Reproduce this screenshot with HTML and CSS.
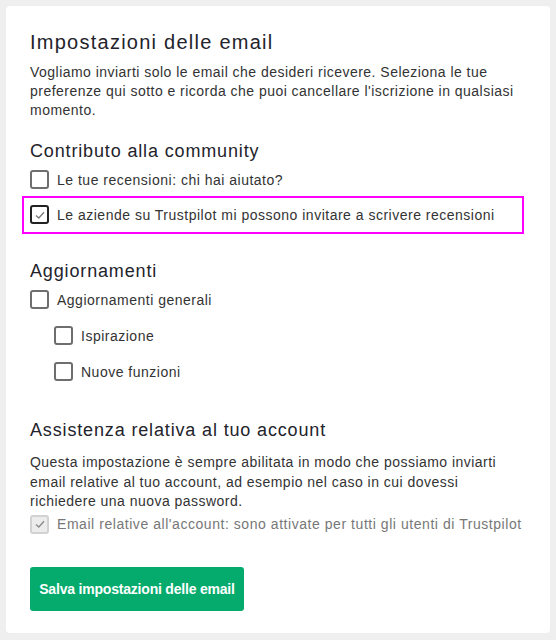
FILE: index.html
```html
<!DOCTYPE html>
<html lang="it">
<head>
  <meta charset="UTF-8">
  <meta name="viewport" content="width=device-width, initial-scale=1.0">
  <title>Impostazioni delle email</title>
  <link rel="stylesheet" href="styles.css">
</head>
<body>

  <div class="card">
    <h1 class="title">Impostazioni delle email</h1>
    <p class="intro">Vogliamo inviarti solo le email che desideri ricevere. Seleziona le tue preferenze qui sotto e ricorda che puoi cancellare l'iscrizione in qualsiasi momento.</p>

    <!-- Community -->
    <h2 class="section-title first">Contributo alla community</h2>
    <label class="option">
      <span class="box"></span>
      <span class="label-text">Le tue recensioni: chi hai aiutato?</span>
    </label>
    <label class="option highlighted">
      <span class="box checked">
        <svg viewBox="0 0 14 14" width="14" height="14"><path d="M3 7.4 L5.8 10 L11 4.2" fill="none" stroke="#7a7a7a" stroke-width="1.3"/></svg>
      </span>
      <span class="label-text">Le aziende su Trustpilot mi possono invitare a scrivere recensioni</span>
    </label>

    <!-- Updates -->
    <h2 class="section-title updates">Aggiornamenti</h2>
    <label class="option">
      <span class="box"></span>
      <span class="label-text">Aggiornamenti generali</span>
    </label>
    <div class="sub-options">
      <label class="option">
        <span class="box"></span>
        <span class="label-text">Ispirazione</span>
      </label>
      <label class="option">
        <span class="box"></span>
        <span class="label-text">Nuove funzioni</span>
      </label>
    </div>

    <!-- Account -->
    <h2 class="section-title account">Assistenza relativa al tuo account</h2>
    <p class="account-info">Questa impostazione è sempre abilitata in modo che possiamo inviarti email relative al tuo account, ad esempio nel caso in cui dovessi richiedere una nuova password.</p>
    <label class="option disabled">
      <span class="box">
        <svg viewBox="0 0 14 14" width="14" height="14"><path d="M3 7.4 L5.8 10 L11 4.2" fill="none" stroke="#8a8a8a" stroke-width="1.3"/></svg>
      </span>
      <span class="label-text">Email relative all'account: sono attivate per tutti gli utenti di Trustpilot</span>
    </label>

    <button class="save-button">Salva impostazioni delle email</button>
  </div>

</body>
</html>
```

FILE: styles.css
```css
body {
  margin: 0;
  padding: 6px;
  background-color: #efefef;
  font-family: "Liberation Sans", Arial, sans-serif;
  color: #2e2e33;
}
.card {
  background-color: #fff;
  border-radius: 4px;
  padding: 24px 24px 23px 24px;
  height: 627px;
  box-sizing: border-box;
}
.title {
  margin: 0;
  font-size: 20px;
  line-height: 24px;
  font-weight: normal;
  letter-spacing: 1.25px;
  color: #23232b;
}
.intro, .account-info {
  margin: 9px 0 0 0;
  font-size: 14px;
  line-height: 19px;
  letter-spacing: 0.47px;
  color: #333;
}
.account-info {
  margin-top: 12px;
  line-height: 19.5px;
}
.section-title {
  margin: 20px 0 0 0;
  font-size: 18px;
  line-height: 22px;
  font-weight: normal;
  letter-spacing: 0.85px;
  color: #23232b;
}
.section-title.updates {
  margin-top: 26px;
}
.section-title.account {
  margin-top: 38px;
}
.option {
  display: flex;
  align-items: center;
  gap: 8px;
  margin-top: 8px;
  height: 19px;
  font-size: 14px;
  line-height: 18px;
  letter-spacing: 0.5px;
  color: #333;
}
.option.highlighted {
  height: auto;
  margin: 7px 2px 0 -8px;
  padding: 7px 6px 8px 6px;
  border: 2px solid #f0f;
}
.box {
  width: 19px;
  height: 19px;
  box-sizing: border-box;
  border: 2px solid #6e6e6e;
  border-radius: 3px;
  flex-shrink: 0;
  display: flex;
  align-items: center;
  justify-content: center;
}
.box.checked {
  border-color: #222;
}
.sub-options {
  padding-left: 24px;
}
.sub-options .option {
  margin-top: 17px;
}
.option.disabled {
  margin-top: 3px;
  color: #777;
  letter-spacing: 0.55px;
}
.option.disabled .box {
  border: 2px solid #d2d2d2;
  background-color: #ececec;
}
.save-button {
  display: block;
  margin-top: 33px;
  width: 214px;
  height: 44px;
  border: none;
  border-radius: 3px;
  background-color: #04ab6d;
  color: #fff;
  font-family: "Liberation Sans", Arial, sans-serif;
  font-size: 14px;
  font-weight: bold;
  letter-spacing: -0.2px;
}
```
